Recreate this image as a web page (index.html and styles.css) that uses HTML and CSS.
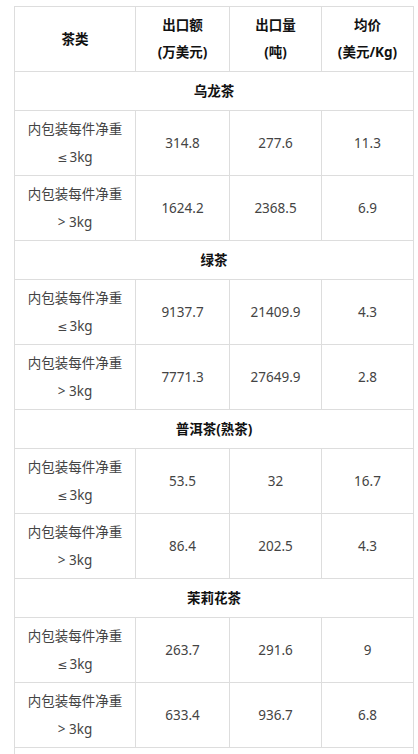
FILE: index.html
```html
<!DOCTYPE html>
<html lang="zh">
<head>
<meta charset="utf-8">
<link rel="stylesheet" href="styles.css">
</head>
<body>
<div class="wrap">
<table class="tea">
<colgroup>
<col class="c1"><col class="c2"><col class="c3"><col class="c4">
</colgroup>
<thead>
<tr><th>茶类</th><th>出口额<br>(万美元)</th><th>出口量<br>(吨)</th><th>均价<br>(美元/Kg)</th></tr>
</thead>
<tbody>
<tr class="group"><td colspan="4">乌龙茶</td></tr>
<tr><td>内包装每件净重<br><span class="sym">≤</span>3kg</td><td>314.8</td><td>277.6</td><td>11.3</td></tr>
<tr><td>内包装每件净重<br>&gt; 3kg</td><td>1624.2</td><td>2368.5</td><td>6.9</td></tr>
<tr class="group"><td colspan="4">绿茶</td></tr>
<tr><td>内包装每件净重<br><span class="sym">≤</span>3kg</td><td>9137.7</td><td>21409.9</td><td>4.3</td></tr>
<tr><td>内包装每件净重<br>&gt; 3kg</td><td>7771.3</td><td>27649.9</td><td>2.8</td></tr>
<tr class="group"><td colspan="4">普洱茶(熟茶)</td></tr>
<tr><td>内包装每件净重<br><span class="sym">≤</span>3kg</td><td>53.5</td><td>32</td><td>16.7</td></tr>
<tr><td>内包装每件净重<br>&gt; 3kg</td><td>86.4</td><td>202.5</td><td>4.3</td></tr>
<tr class="group"><td colspan="4">茉莉花茶</td></tr>
<tr><td>内包装每件净重<br><span class="sym">≤</span>3kg</td><td>263.7</td><td>291.6</td><td>9</td></tr>
<tr><td>内包装每件净重<br>&gt; 3kg</td><td>633.4</td><td>936.7</td><td>6.8</td></tr>
<tr class="group"><td colspan="4">&nbsp;</td></tr>
</tbody>
</table>
</div>
</body>
</html>
```
FILE: styles.css
```css
html, body {
  margin: 0;
  padding: 0;
  background: #ffffff;
}
.wrap {
  padding: 6px 0 0 14px;
}
.tea {
  border-collapse: collapse;
  table-layout: fixed;
  width: 400px;
  font-family: "Noto Sans", "Noto Sans CJK SC", sans-serif;
  font-size: 13.5px;
  color: #444;
}
.c1 { width: 121px; }
.c2 { width: 94px; }
.c3 { width: 92px; }
.c4 { width: 92px; }
.tea th, .tea td {
  border: 1px solid #dddddd;
  text-align: center;
  vertical-align: middle;
  line-height: 28px;
  padding: 4px 0;
  white-space: nowrap;
}
.tea th {
  font-weight: bold;
  color: #111;
  line-height: 27px;
  padding: 5px 0;
}
.tea .group td {
  font-weight: bold;
  color: #111;
  padding: 5px 0;
}
.sym {
  font-family: "DejaVu Sans", "Liberation Sans", sans-serif;
  font-size: 12px;
  line-height: 0;
  margin-right: 2px;
}
```
